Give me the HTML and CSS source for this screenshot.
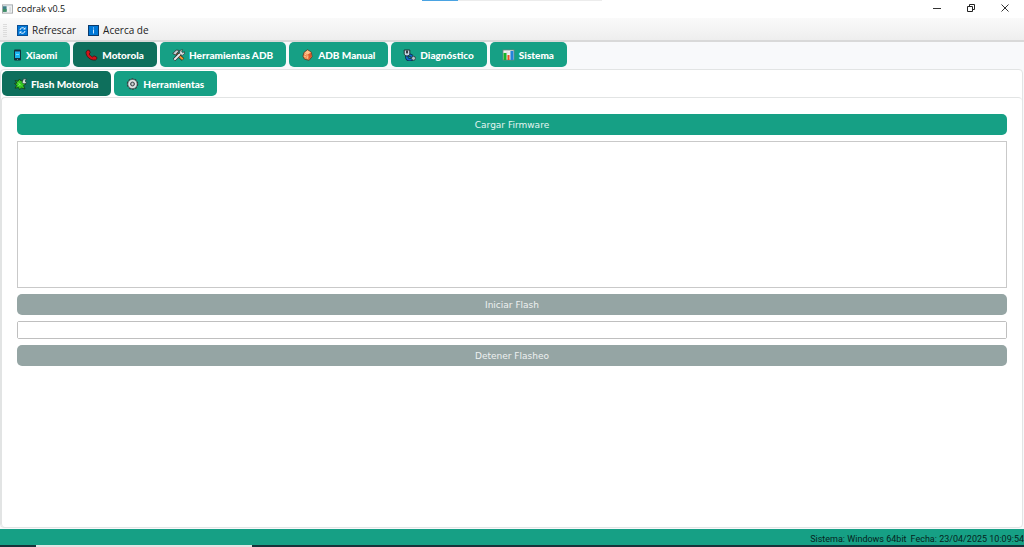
FILE: index.html
```html
<!DOCTYPE html>
<html lang="es">
<head>
  <meta charset="UTF-8" />
  <meta name="viewport" content="width=device-width, initial-scale=1.0"/>
  <title>codrak v0.5</title>
  <link rel="stylesheet" href="styles.css">
</head>
<body>

  <header class="titlebar">
    <svg class="app-icon" viewBox="0 0 12 10">
      <rect x="0.5" y="0.5" width="11" height="9" fill="#f4f6f6" stroke="#a4a8aa"/>
      <rect x="1" y="1" width="10" height="1" fill="#c9d3dc"/>
      <rect x="1" y="2" width="4" height="6" fill="#3d7f86"/>
      <rect x="1" y="5" width="4" height="3" fill="#3f8f63"/>
      <rect x="8" y="3" width="2" height="5" fill="#d5dadd"/>
    </svg>
    <span class="title">codrak v0.5</span>
    <div class="loader"><div class="loader-bar"></div></div>
    <div class="window-buttons">
      <button class="win-btn" aria-label="Minimizar">
        <svg viewBox="0 0 8 8"><path d="M0 4.5h8" stroke="#333" fill="none"/></svg>
      </button>
      <button class="win-btn" aria-label="Restaurar">
        <svg viewBox="0 0 8 8"><path d="M.5 2.5h5v5h-5zM2.5 2V.5h5v5H6" stroke="#222" fill="none"/></svg>
      </button>
      <button class="win-btn" aria-label="Cerrar">
        <svg viewBox="0 0 8 8"><path d="M.5.5l7 7M7.5.5l-7 7" stroke="#333" fill="none"/></svg>
      </button>
    </div>
  </header>

  <div class="toolbar">
    <span class="grip"></span>
    <button class="tool">
      <svg viewBox="0 0 11 11">
        <rect x="0.5" y="0.5" width="10" height="10" fill="#0078d7" stroke="#0b4f94"/>
        <path d="M3 5a2.6 2.6 0 0 1 4.700-1.200M8 6a2.600 2.600 0 0 1-4.700 1.200" fill="none" stroke="#e6f3ff"/>
        <path d="M8.500 2v2.500H6zM2.500 9V6.500H5z" fill="#e6f3ff"/>
      </svg>
      Refrescar
    </button>
    <button class="tool">
      <svg viewBox="0 0 11 11">
        <rect x="0.5" y="0.5" width="10" height="10" fill="#0078d7" stroke="#0b3a6b"/>
        <path d="M5 2.500h1v1H5zM5 4.500h1v4H5z" fill="#d4eaff"/>
      </svg>
      Acerca de
    </button>
  </div>

  <nav class="tabs" role="tablist">
    <button class="tab" role="tab">
      <svg class="narrow" viewBox="0 0 9 12">
        <rect x="1" y="0.500" width="7" height="11" rx="1" fill="#12303a"/>
        <rect x="2" y="3" width="5" height="6" fill="#19b5f1"/>
        <rect x="2" y="2" width="5" height="1" fill="#1c75a0"/>
        <rect x="3" y="5" width="3" height="1" fill="#7fdcff"/>
        <rect x="4" y="10" width="1" height="1" fill="#6c858c"/>
      </svg>
      Xiaomi
    </button>
    <button class="tab active" role="tab" aria-selected="true">
      <svg viewBox="0 0 13 12">
        <path d="M1 3l1.500-1.800h1.800L5.200 3.500 4.200 5c.8 1.500 1.900 2.400 3.300 3l1.500-1.200 2.800 1.400v1.600L10.500 11C5.500 11.800.8 7.500 1 3z" fill="#d0141a" stroke="#3c0b0d" stroke-width=".7"/>
      </svg>
      Motorola
    </button>
    <button class="tab" role="tab">
      <svg viewBox="0 0 13 12">
        <path d="M4 4l7 6.500" stroke="#222" stroke-width="3.400"/>
        <path d="M5 5l5.800 5.300" stroke="#f29a2e" stroke-width="2.200"/>
        <path d="M.8 4.500L4.300 1l3 .5L3.500 6z" fill="#c4cbd0" stroke="#222" stroke-width=".7"/>
        <path d="M2 11L9 4" stroke="#222" stroke-width="3.200"/>
        <path d="M2.300 10.700L9 4" stroke="#e3e8ea" stroke-width="2"/>
        <path d="M8 1.500L10.500.6 9.700 3l1 .8 1.900-1.200-.3 2.400-2.200 1.400L7.500 4.500z" fill="#e3e8ea" stroke="#222" stroke-width=".6"/>
      </svg>
      Herramientas ADB
    </button>
    <button class="tab" role="tab">
      <svg viewBox="0 0 12 12">
        <path d="M6 .7l3.800 2.500.8 4.500-3 3.600-4.500-1-1.700-3 1-3.800z" fill="#f08a4b" stroke="#5a3a28" stroke-width=".8"/>
        <path d="M6 1.300l3.300 2.200L6.500 5.500 3 4z" fill="#ffc28c"/>
        <path d="M6.500 5.500l3-1.800.6 3.800-2.800 3z" fill="#d9582c"/>
        <path d="M3 5l2 1M2.500 7l2.500 1.200M6 9.500l.5-3" stroke="#ffd3a8" stroke-width=".8"/>
      </svg>
      ADB Manual
    </button>
    <button class="tab" role="tab">
      <svg viewBox="0 0 13 12">
        <path d="M3.800 6.500v1.500c0 3 4 3.500 5.700 1.500M5.500 5.500l4 2" fill="none" stroke="#102642" stroke-width="3.200"/>
        <path d="M3.800 6.500v1.500c0 3 4 3.500 5.700 1.500M5.500 5.500l4 2" fill="none" stroke="#0d6bd0" stroke-width="1.700"/>
        <path d="M1.200 1v3.300c0 1.600 1.200 2.700 2.800 2.700s2.800-1.100 2.800-2.700V1z" fill="#c2d6e0" stroke="#20262b" stroke-width=".9"/>
        <path d="M3 1.500h2v2.200L4 5 3 3.700z" fill="#343b41"/>
        <circle cx="10.500" cy="9.300" r="2" fill="#b5c3cc" stroke="#26323a" stroke-width=".8"/>
      </svg>
      Diagnóstico
    </button>
    <button class="tab" role="tab">
      <svg viewBox="0 0 12 12">
        <rect x="0.500" y="1" width="11" height="10" fill="#f3f3f3" stroke="#6e8580" stroke-width=".8"/>
        <path d="M1 4h10M1 7h10M4.500 1v10M8 1v10" stroke="#ccd2d2" stroke-width=".5"/>
        <rect x="1" y="4" width="3" height="7" fill="#16b52a"/>
        <rect x="5" y="6" width="2" height="5" fill="#ef4b23"/>
        <rect x="8" y="2" width="3" height="9" fill="#2384dc"/>
      </svg>
      Sistema
    </button>
  </nav>

  <main class="pane">
    <nav class="tabs" role="tablist">
      <button class="tab active" role="tab" aria-selected="true">
        <svg viewBox="0 0 13 12">
          <path d="M1 2.500L4 3.200 5.500 1 7 3l3-1-.7 2.700L12 6l-2.500 1.500L11 11l-3.500-1-2 1.600-1-2.100-3.500.7L2.600 7.500.5 5.500 3 5z" fill="#35c51e" stroke="#12391b" stroke-width=".8"/>
          <path d="M8 4.500L9.500.8l3 .3L11 3l1.700 1.700L10 6z" fill="#d3dfdc" stroke="#1b3c36" stroke-width=".7"/>
          <path d="M4 4.500l3 3M4.500 8L6 6" stroke="#8cf06b"/>
        </svg>
        Flash Motorola
      </button>
      <button class="tab" role="tab">
        <svg viewBox="0 0 13 12">
          <circle cx="6.500" cy="6" r="4.800" fill="none" stroke="#333b3d" stroke-width="1.800" stroke-dasharray="2 1"/>
          <circle cx="6.500" cy="6" r="4.600" fill="#e2e6e7" stroke="#4a5355" stroke-width=".6"/>
          <circle cx="6.500" cy="6" r="2" fill="#8d979a" stroke="#3f484b" stroke-width=".9"/>
          <circle cx="6.500" cy="6" r=".8" fill="#f2f2f2"/>
        </svg>
        Herramientas
      </button>
    </nav>

    <section class="content">
      <button class="btn">Cargar Firmware</button>
      <textarea class="log" aria-label="Registro" readonly></textarea>
      <button class="btn" disabled>Iniciar Flash</button>
      <progress class="progress" aria-label="Progreso" value="0" max="100"></progress>
      <button class="btn" disabled>Detener Flasheo</button>
    </section>
  </main>

  <footer class="statusbar">
    <span>Sistema: Windows 64bit</span>
    <span>Fecha: 23/04/2025 10:09:54</span>
  </footer>
  <div class="taskbar"><div class="taskbar-item"></div></div>

</body>
</html>
```
FILE: styles.css
```css
:root {
  --accent: #16a085;
  --accent-dark: #0e6f5c;
  --disabled: #95a5a4;
  --line: #e2e4e4;
}
* { box-sizing: border-box; }
body {
  margin: 0; height: 100vh;
  display: flex; flex-direction: column;
  background: #f8f9fb; color: #222;
  font-family: "Open Sans", "Noto Sans", sans-serif;
  font-size: 10px;
}
button {
  border: none; margin: 0; padding: 0;
  background: none; color: inherit;
  font: inherit; cursor: pointer;
}
svg { display: block; flex: none; }

.titlebar {
  position: relative;
  display: flex; align-items: center;
  height: 18px; padding: 0 2px; gap: 4px;
  background: white; font-size: 9px; color: #111;
}
.app-icon { width: 11px; height: 10px; }
.title { padding-bottom: 1px; }
.loader {
  position: absolute; top: 0; left: 50%;
  width: 180px; height: 1px;
  background: #ececec;
  transform: translateX(-50%);
}
.loader-bar { width: 20%; height: 1px; background: #4aa3e2; }
.window-buttons { display: flex; margin-left: auto; padding-bottom: 2px; }
.win-btn {
  width: 34px; height: 16px;
  display: flex; align-items: center; justify-content: center;
}
.win-btn svg { width: 8px; height: 8px; }

.toolbar {
  display: flex; align-items: center;
  height: 24px; padding: 2px 3px 0; gap: 12px;
  background: linear-gradient(#fafafa, #eeeeee);
  border-bottom: 2px solid #d9d9d9;
}
.grip {
  width: 4px; height: 13px; margin-right: -2px;
  background: repeating-linear-gradient(#dcdcdc 0 1px, transparent 1px 2px);
}
.tool { display: flex; align-items: center; gap: 4px; }
.tool svg { width: 11px; height: 11px; }

.tabs { display: flex; gap: 3px; padding: 0 1px; }
.tab {
  display: flex; align-items: center;
  height: 25px; padding: 0 13px 0 12px; gap: 4px;
  background: var(--accent); color: white;
  border-radius: 5px;
  font-family: Lato, "Open Sans", sans-serif; font-weight: 900;
}
.tab.active { background: var(--accent-dark); }
.tab svg { width: 13px; height: 12px; }
.tab svg.narrow { width: 9px; }

.pane {
  flex: 1; display: flex; flex-direction: column;
  margin: 2px 1px 0 0; padding-top: 1px;
  background: white;
  border: 1px solid var(--line); border-radius: 4px;
}
.content {
  flex: 1; display: flex; flex-direction: column;
  margin-top: 1px; gap: 6px; padding: 16px 15px;
  border: 1px solid var(--line); border-width: 1px 0 0 1px;
  border-radius: 4px;
}
.btn {
  height: 21px; border-radius: 5px;
  background: var(--accent); color: #e4f5f1;
  font-family: "DejaVu Sans", sans-serif; font-size: 9px;
}
.btn:disabled { background: var(--disabled); color: #eef1f1; cursor: default; }
.log {
  display: block; width: 100%; height: 147px;
  border: 1px solid #c9c9c9; background: white;
  resize: none; outline: none;
}
.progress {
  appearance: none; width: 100%; height: 18px;
  border: 1px solid #bfbfbf; border-radius: 2px;
  background: white;
}
.progress::-webkit-progress-bar { background: white; }
.progress::-webkit-progress-value { background: var(--accent); }

.statusbar {
  display: flex; align-items: center; justify-content: flex-end;
  height: 16px; margin-top: 1px; gap: 4px; padding-top: 3px;
  background: var(--accent); color: #06231d;
  font-family: Roboto, "Open Sans", sans-serif; font-size: 9px;
}
.taskbar { height: 2px; padding-left: 36px; background: #15343a; }
.taskbar-item { width: 216px; height: 2px; background: #dfe5e3; }
```
